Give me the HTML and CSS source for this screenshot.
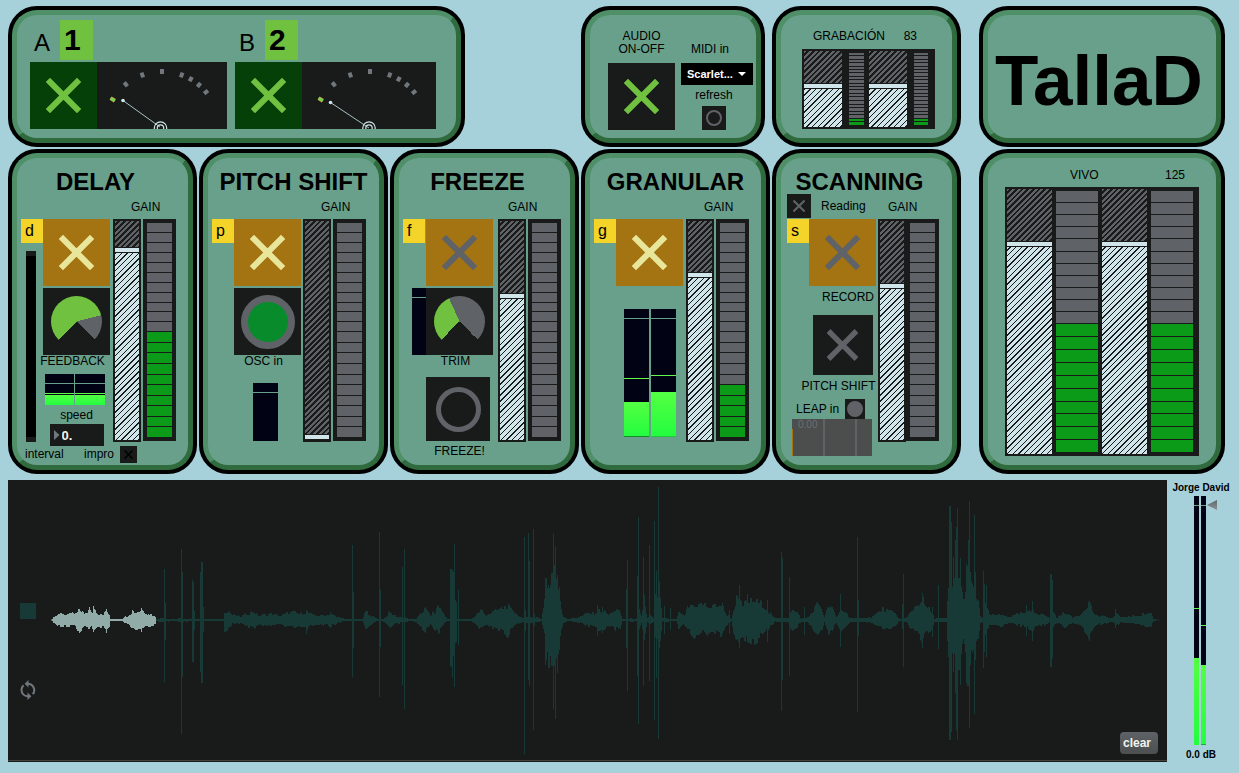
FILE: index.html
```html
<!DOCTYPE html>
<html lang="es">
<head>
    <meta charset="UTF-8">
    <meta name="viewport" content="width=device-width, initial-scale=1.0">
    <title>TallaD</title>
    <link rel="stylesheet" href="styles.css">
</head>
<body>
    <main class="rack">
        <section class="panel panel-inputs">
            <div class="panel-body channels">
                <div class="channel">
                    <div class="channel-head">
                        <span class="channel-name">A</span>
                        <span class="channel-key">1</span>
                    </div>
                    <div class="channel-row">
                        <input type="checkbox" class="toggle toggle-input" aria-label="Input A" checked>
                        <svg class="needle" width="130" height="67" viewBox="0 0 130 67">
                            <g id="ticks" class="ticks" transform="translate(65 67)">
                                <rect x="-2" y="-60" width="4" height="5" transform="rotate(-39)"/>
                                <rect x="-2" y="-60" width="4" height="5" transform="rotate(-20)"/>
                                <rect x="-2" y="-60" width="4" height="5"/>
                                <rect x="-2" y="-60" width="4" height="5" transform="rotate(20)"/>
                                <rect x="-2" y="-60" width="4" height="5" transform="rotate(30)"/>
                                <rect x="-2" y="-60" width="4" height="5" transform="rotate(40)"/>
                                <rect x="-2" y="-60" width="4" height="5" transform="rotate(50)"/>
                                <g transform="rotate(-59)">
                                    <rect class="tick-hot" x="-2" y="-60" width="4" height="5"/>
                                    <rect class="tick-on" x="-1" y="-60" width="2" height="5"/>
                                </g>
                            </g>
                            <path class="needle-line" d="M26 38.5 L63 65"/>
                            <circle class="needle-tip" cx="26" cy="38.5" r="1.8"/>
                            <circle class="needle-ring" cx="63.5" cy="66" r="6.2"/>
                            <circle class="needle-ring" cx="63.5" cy="66" r="3.2"/>
                        </svg>
                    </div>
                </div>
                <div class="channel">
                    <div class="channel-head">
                        <span class="channel-name">B</span>
                        <span class="channel-key">2</span>
                    </div>
                    <div class="channel-row">
                        <input type="checkbox" class="toggle toggle-input" aria-label="Input B" checked>
                        <svg class="needle" width="134" height="67" viewBox="0 0 134 67">
                            <use href="#ticks" x="3"/>
                            <path class="needle-line" d="M28.5 40.5 L67 66"/>
                            <circle class="needle-tip" cx="28.5" cy="40.5" r="1.8"/>
                            <circle class="needle-ring" cx="67" cy="66" r="6.2"/>
                            <circle class="needle-ring" cx="67" cy="66" r="3.2"/>
                        </svg>
                    </div>
                </div>
            </div>
        </section>

        <section class="panel panel-audio">
            <div class="panel-body audio">
                <div class="audio-col">
                    <label class="audio-label" for="audioOn">AUDIO<br>ON-OFF</label>
                    <input type="checkbox" class="toggle toggle-green" id="audioOn" checked>
                </div>
                <div class="audio-col">
                    <label class="audio-label midi-label" for="midiIn">MIDI in</label>
                    <div class="select">
                        <select id="midiIn">
                            <option>Scarlet...</option>
                        </select>
                    </div>
                    <div class="refresh">
                        <label for="refresh">refresh</label>
                        <button class="round round-refresh" id="refresh"></button>
                    </div>
                </div>
            </div>
        </section>

        <section class="panel">
            <div class="panel-body recording">
                <div class="mixer-head">
                    <span>GRABACIÓN</span>
                    <span>83</span>
                </div>
                <div class="mixer">
                    <input type="range" class="fader" aria-label="Grabación L" value="54" style="--value: 54">
                    <div class="level" data-on="2"></div>
                    <input type="range" class="fader" aria-label="Grabación R" value="54" style="--value: 54">
                    <div class="level" data-on="2"></div>
                </div>
            </div>
        </section>

        <section class="panel panel-last">
            <div class="panel-body">
                <h1>TallaD</h1>
            </div>
        </section>

        <section class="panel">
            <div class="panel-body">
                <h2 class="shifted">DELAY</h2>
                <div class="module module-wide">
                    <div class="controls">
                        <div class="controls-row">
                            <div class="side">
                                <span class="key">d</span>
                                <input type="range" class="interval" id="interval" value="0">
                            </div>
                            <div class="main">
                                <input type="checkbox" class="toggle toggle-effect" aria-label="Delay" checked>
                                <div class="dial">
                                    <input type="range" id="feedback" value="78" style="--value: 78">
                                </div>
                                <label class="caption" for="feedback">FEEDBACK</label>
                                <div class="vus vus-delay">
                                    <div class="vu" style="--level: 10px; --peak: 37%"></div>
                                    <div class="vu" style="--level: 10px; --peak: 37%"></div>
                                </div>
                                <label class="caption caption-speed" for="speed">speed</label>
                                <div class="number">
                                    <input type="text" id="speed" value="0.">
                                </div>
                            </div>
                        </div>
                    </div>
                    <div class="gain">
                        <label for="gainDelay">GAIN</label>
                        <div class="gain-row">
                            <input type="range" class="fader" id="gainDelay" value="88" style="--value: 88">
                            <div class="level" data-on="10"></div>
                        </div>
                    </div>
                </div>
                <div class="delay-foot">
                    <label for="interval">interval</label>
                    <label for="impro">impro</label>
                    <input type="checkbox" class="toggle toggle-impro" id="impro">
                </div>
            </div>
        </section>

        <section class="panel">
            <div class="panel-body">
                <h2>PITCH SHIFT</h2>
                <div class="module">
                    <div class="controls">
                        <div class="controls-row">
                            <div class="side">
                                <span class="key">p</span>
                            </div>
                            <div class="main">
                                <input type="checkbox" class="toggle toggle-effect" aria-label="Pitch shift" checked>
                                <button class="round round-osc" id="osc"></button>
                                <label class="caption" for="osc">OSC in</label>
                                <div class="vus vus-pitch">
                                    <div class="vu"></div>
                                </div>
                            </div>
                        </div>
                    </div>
                    <div class="gain">
                        <label for="gainPitch">GAIN</label>
                        <div class="gain-row">
                            <input type="range" class="fader" id="gainPitch" value="0" style="--value: 0">
                            <div class="level" data-on="0"></div>
                        </div>
                    </div>
                </div>
            </div>
        </section>

        <section class="panel">
            <div class="panel-body">
                <h2 class="shifted">FREEZE</h2>
                <div class="module module-freeze">
                    <div class="controls">
                        <div class="controls-row">
                            <div class="side">
                                <span class="key">f</span>
                                <div class="vu vu-trim"></div>
                            </div>
                            <div class="main">
                                <input type="checkbox" class="toggle toggle-effect" aria-label="Freeze">
                                <div class="dial">
                                    <input type="range" id="trim" value="41" style="--value: 41">
                                </div>
                                <label class="caption" for="trim">TRIM</label>
                                <button class="round round-freeze" id="freeze"></button>
                                <label class="freeze-label" for="freeze">FREEZE!</label>
                            </div>
                        </div>
                    </div>
                    <div class="gain gain-left">
                        <label for="gainFreeze">GAIN</label>
                        <div class="gain-row">
                            <input type="range" class="fader" id="gainFreeze" value="66" style="--value: 66">
                            <div class="level" data-on="0"></div>
                        </div>
                    </div>
                </div>
            </div>
        </section>

        <section class="panel">
            <div class="panel-body">
                <h2>GRANULAR</h2>
                <div class="module module-wide">
                    <div class="controls">
                        <div class="controls-row">
                            <div class="side">
                                <span class="key">g</span>
                            </div>
                            <div class="main">
                                <input type="checkbox" class="toggle toggle-effect" aria-label="Granular" checked>
                                <div class="vus vus-granular">
                                    <div class="vu" style="--level: 27%; --peak: 46%"></div>
                                    <div class="vu" style="--level: 35%; --peak: 48%"></div>
                                </div>
                            </div>
                        </div>
                    </div>
                    <div class="gain">
                        <label for="gainGranular">GAIN</label>
                        <div class="gain-row">
                            <input type="range" class="fader" id="gainGranular" value="76" style="--value: 76">
                            <div class="level" data-on="5"></div>
                        </div>
                    </div>
                </div>
            </div>
        </section>

        <section class="panel">
            <div class="panel-body">
                <h2 class="shifted">SCANNING</h2>
                <div class="module module-scanning">
                    <div class="controls">
                        <div class="reading">
                            <input type="checkbox" class="toggle toggle-reading" id="reading">
                            <label for="reading">Reading</label>
                        </div>
                        <div class="controls-row">
                            <div class="side">
                                <span class="key">s</span>
                            </div>
                            <div class="main">
                                <input type="checkbox" class="toggle toggle-effect" id="record">
                                <label class="record-label" for="record">RECORD</label>
                                <input type="checkbox" class="toggle toggle-shift" id="scanShift">
                                <label class="caption caption-shift" for="scanShift">PITCH SHIFT</label>
                            </div>
                        </div>
                        <div class="leap">
                            <label for="leap">LEAP in</label>
                            <button class="round round-leap" id="leap"></button>
                        </div>
                        <div class="leap-view">0.00</div>
                    </div>
                    <div class="gain gain-left">
                        <label for="gainScanning">GAIN</label>
                        <div class="gain-row">
                            <input type="range" class="fader" id="gainScanning" value="71" style="--value: 71">
                            <div class="level" data-on="0"></div>
                        </div>
                    </div>
                </div>
            </div>
        </section>

        <section class="panel panel-last">
            <div class="panel-body live">
                <div class="mixer-head">
                    <span>VIVO</span>
                    <span>125</span>
                </div>
                <div class="mixer">
                    <input type="range" class="fader" aria-label="Vivo L" value="80" style="--value: 80">
                    <div class="level" data-on="10"></div>
                    <input type="range" class="fader" aria-label="Vivo R" value="80" style="--value: 80">
                    <div class="level" data-on="10"></div>
                </div>
            </div>
        </section>
    </main>

    <footer class="bottom">
        <section class="wave">
            <div class="wave-tools">
                <button class="stop-btn" aria-label="Stop"></button>
                <button class="loop-btn" aria-label="Loop">
                    <svg width="16" height="20" viewBox="0 0 16 20">
                        <path d="M3.4 14.6 A6.5 6.5 0 0 1 3.6 5.2 M7.5 3.8 A6.4 6.4 0 0 1 12.8 14.2 M8.5 16.2 A6.4 6.4 0 0 1 3.2 14.4"/>
                        <path class="arrow" d="M8.5 0 V7.6 L4.6 3.8 Z M7.5 12.4 V20 L11.4 16.2 Z"/>
                    </svg>
                </button>
            </div>
            <svg class="wave-view" viewBox="48 -140 1119 280" preserveAspectRatio="none">
                <path id="waveRest" class="wave-rest"/>
                <path id="wavePlayed" class="wave-played"/>
            </svg>
            <button class="clear-btn">clear</button>
        </section>
        <section class="master">
            <label for="master">Jorge David</label>
            <div class="master-meter">
                <div class="vu" style="--level: 35%; --peak: 55%"></div>
                <div class="vu" style="--level: 32%; --peak: 48%"></div>
                <input type="range" class="master-slider" id="master" value="100">
            </div>
            <span>0.0 dB</span>
        </section>
    </footer>
    <script src="script.js"></script>
</body>
</html>
```

FILE: styles.css
```css
* {
    box-sizing: border-box;
}
body {
    margin: 0;
    padding: 6px 4px 11px 8px;
    min-height: 100vh;
    display: flex;
    flex-direction: column;
    gap: 6px;
    background-color: #a6d1db;
    color: #000;
    font-family: "Liberation Sans", Arial, sans-serif;
    font-size: 12px;
    line-height: 13px;
}
h1, h2 {
    margin: 0;
    font-weight: bold;
}
h1 {
    padding: 30px 0 0 7px;
    font-size: 71px;
    line-height: 71px;
}
h2 {
    padding-top: 12px;
    font-size: 24px;
    line-height: 24px;
    text-align: center;
    white-space: nowrap;
}
h2.shifted {
    padding-right: 14px;
}
input, button, select {
    display: block;
    margin: 0;
    padding: 0;
    border: none;
    border-radius: 0;
    appearance: none;
    flex-shrink: 0;
    font-family: inherit;
}
label {
    white-space: nowrap;
}

/* panels */
.rack {
    display: grid;
    grid-template-columns: repeat(5, 189fr) 262fr;
    gap: 2px;
    padding-right: 10px;
}
.panel {
    display: flex;
    background: #000;
    border: 4px solid #000;
    border-radius: 29px;
}
.panel-body {
    flex: 1;
    min-width: 0;
    background: #68a08b;
    border: 5px solid;
    border-color: #4f9069 #306b3d #306b3d #4f9069;
    border-radius: 25px;
}
.panel-inputs {
    grid-column: span 3;
    width: 80%;
}
.panel-audio {
    margin-right: 5px;
}
.panel-last {
    margin-left: 16px;
}

/* toggles */
.toggle {
    display: flex;
    align-items: center;
    justify-content: center;
    width: 67px;
    height: 67px;
    background: #191b1a;
    color: #5f6267;
}
.toggle::before {
    content: '';
    width: 53%;
    height: 53%;
    background: currentColor;
    clip-path: polygon(12% 0, 50% 38%, 88% 0, 100% 12%, 62% 50%, 100% 88%, 88% 100%, 50% 62%, 12% 100%, 0 88%, 38% 50%, 0 12%);
}
.toggle-input {
    background: #044007;
}
.toggle-input:checked, .toggle-green:checked {
    color: #70c140;
}
.toggle-effect {
    background: #a57412;
}
.toggle-effect:checked {
    color: #e8e69b;
}
.toggle-reading {
    width: 24px;
    height: 24px;
}
.toggle-shift {
    width: 60px;
    height: 60px;
    margin-top: 11px;
}
.toggle-impro {
    width: 17px;
    height: 17px;
    color: #000;
}

/* round buttons */
.round {
    display: flex;
    align-items: center;
    justify-content: center;
    background: #191b1a;
}
.round::before {
    content: '';
    box-sizing: border-box;
    border-radius: 50%;
    border: 2px solid #5f6267;
}
.round-refresh {
    width: 24px;
    height: 24px;
}
.round-refresh::before {
    width: 16px;
    height: 16px;
}
.round-osc {
    width: 67px;
    height: 67px;
    margin-top: 2px;
}
.round-osc::before {
    width: 54px;
    height: 54px;
    border-width: 7px;
    background: #088c2b;
}
.round-freeze {
    width: 64px;
    height: 64px;
    margin-top: 9px;
    align-self: flex-start;
}
.round-freeze::before {
    width: 45px;
    height: 45px;
    border-width: 5px;
}
.round-leap {
    width: 20px;
    height: 20px;
}
.round-leap::before {
    width: 16px;
    height: 16px;
    background: #5f6267;
}

/* faders and levels */
.fader {
    --pos: calc(100% - var(--value) * 1%);
    width: 28px;
    height: 223px;
    border: 2px solid #191b1a;
    writing-mode: vertical-lr;
    direction: rtl;
    background:
        linear-gradient(#191b1a 1px, #cfe5ea 1px 5px, #191b1a 5px) 0 var(--pos) / 100% 6px no-repeat,
        repeating-linear-gradient(135deg, transparent 0 2px, #191b1a 2px 4px) 0 0 / 100% var(--pos) no-repeat,
        linear-gradient(#5f6267, #5f6267) 0 0 / 100% var(--pos) no-repeat,
        repeating-linear-gradient(135deg, #cfe5ea 0 3px, #191b1a 3px 4px);
    background-origin: padding-box;
    background-clip: padding-box;
}
.fader::-webkit-slider-thumb,
.dial input::-webkit-slider-thumb,
.interval::-webkit-slider-thumb {
    appearance: none;
    width: 6px;
    height: 6px;
    opacity: 0;
}
.level {
    display: flex;
    flex-direction: column;
    gap: 1px;
    width: 33px;
    height: 222px;
    padding: 4px;
    background: #191b1a;
}
.level i {
    flex: 1;
    background: #5f6267;
}
.level i:nth-child(n+12) {
    flex-grow: 1.07;
}
.level i.on {
    background: #0c9a19;
}
.mixer {
    display: flex;
    padding: 2px;
    background: #191b1a;
}
.mixer .fader {
    border: none;
}
.mixer-head {
    display: flex;
    justify-content: space-between;
}

/* black meters */
.vus {
    display: flex;
    gap: 2px;
}
.vu {
    flex: 1;
    --level: 0%;
    --peak: -20%;
    background:
        linear-gradient(#68a08b, #68a08b) 0 9px / 100% 1px no-repeat,
        linear-gradient(#62f84c, #62f84c) 0 calc(100% - var(--peak)) / 100% 1px no-repeat,
        linear-gradient(#54ff42, #23fd40) 0 100% / 100% var(--level) no-repeat,
        #010214;
}

/* inputs A and B */
.channels {
    display: flex;
    gap: 8px;
    padding: 5px 0 9px 13px;
}
.channel-head {
    display: flex;
    gap: 10px;
    height: 42px;
    padding-left: 4px;
}
.channel-name {
    width: 16px;
    padding-top: 11px;
    font-size: 24px;
    line-height: 24px;
}
.channel-key {
    width: 33px;
    height: 40px;
    padding-left: 4px;
    background: #70c140;
    font-size: 30px;
    font-weight: bold;
    line-height: 40px;
}
.channel-row {
    display: flex;
}
.needle {
    display: block;
    background: #191b1a;
}
.ticks {
    fill: #70787d;
}
.tick-hot {
    fill: #cfa452;
}
.tick-on {
    fill: #5fe04a;
}
.needle-line {
    stroke: #a9c0c6;
    stroke-width: 1;
}
.needle-tip {
    fill: #cfe5ea;
}
.needle-ring {
    fill: none;
    stroke: #cfe5ea;
    stroke-width: 1.2;
}

/* audio */
.audio {
    display: flex;
    align-items: flex-end;
    gap: 6px;
    padding: 15px 0 8px 18px;
}
.audio-col {
    display: flex;
    flex-direction: column;
    align-items: center;
}
.audio-label {
    margin-bottom: 7px;
    text-align: center;
}
.midi-label {
    align-self: flex-start;
    padding-left: 10px;
}
.refresh {
    display: flex;
    flex-direction: column;
    align-items: center;
    gap: 4px;
    padding: 4px 6px 0 0;
}
.select {
    position: relative;
}
.select select {
    width: 72px;
    height: 22px;
    padding-left: 6px;
    background: #000;
    color: #fff;
    font-size: 11px;
    font-weight: bold;
}
.select::after {
    content: '';
    position: absolute;
    top: 9px;
    right: 7px;
    width: 8px;
    height: 4px;
    background: #fff;
    clip-path: polygon(0 0, 100% 0, 50% 100%);
    pointer-events: none;
}

/* recording and live mixers */
.recording {
    padding: 15px 17px 0 21px;
}
.recording .mixer-head {
    padding: 0 18px 6px 11px;
}
.recording .mixer {
    width: 133px;
}
.recording .fader {
    width: 38px;
    height: 76px;
}
.recording .level {
    width: 28px;
    height: 76px;
    padding: 2px 5px 2px 7px;
}
.live {
    padding: 11px 0 0 17px;
}
.live .mixer-head {
    width: 194px;
    padding: 0 14px 5px 65px;
}
.live .mixer {
    width: 194px;
}
.live .fader {
    width: 45px;
    height: 265px;
}
.live .level {
    width: 51px;
    height: 265px;
    padding: 2px 4px;
}

/* effect modules */
.module {
    display: flex;
    align-items: flex-start;
    gap: 2px;
    padding-left: 4px;
}
.module-wide {
    gap: 3px;
}
.module-freeze {
    gap: 5px;
}
.module-scanning {
    padding-left: 6px;
}
.controls {
    padding-top: 25px;
}
.module-scanning .controls {
    padding-top: 0;
    width: 89px;
}
.controls-row {
    display: flex;
}
.side {
    display: flex;
    flex-direction: column;
    width: 22px;
}
.module-freeze .side {
    width: 23px;
}
.key {
    width: 22px;
    height: 24px;
    padding-left: 4px;
    background: #f4d428;
    font-size: 16px;
    line-height: 24px;
}
.interval {
    width: 10px;
    height: 191px;
    margin: 8px 0 0 5px;
    writing-mode: vertical-lr;
    direction: rtl;
    background: #000;
    border: solid #191b1a;
    border-width: 5px 0;
}
.vu-trim {
    flex: none;
    align-self: flex-end;
    width: 14px;
    height: 67px;
    margin-top: 45px;
}
.main {
    display: flex;
    flex-direction: column;
    align-items: center;
    width: 67px;
}
.dial {
    margin-top: 2px;
    padding: 8px;
    background: #191b1a;
}
.dial input {
    width: 51px;
    height: 51px;
    border-radius: 50%;
    background: conic-gradient(from 225deg, #70c140 calc(var(--value) * 2.7deg), #5f6267 0 270deg, transparent 0);
}
.caption {
    padding-right: 8px;
}
.caption-speed {
    margin: 4px 0 2px;
    padding-right: 0;
}
.caption-shift {
    margin-top: 5px;
}
.record-label {
    align-self: flex-end;
    margin-top: 5px;
    padding-right: 2px;
}
.freeze-label {
    margin-top: 4px;
}
.vus-delay {
    width: 60px;
    height: 31px;
    margin: 6px 4px 0 0;
    gap: 1px;
}
.vus-pitch {
    width: 25px;
    height: 58px;
    margin: 15px 4px 0 0;
}
.vus-granular {
    width: 52px;
    height: 128px;
    margin-top: 23px;
}
.number {
    display: flex;
    align-items: center;
    gap: 2px;
    width: 54px;
    height: 22px;
    padding-left: 4px;
    background: #191b1a;
}
.number::before {
    content: '';
    width: 6px;
    height: 11px;
    background: #70787d;
    clip-path: polygon(0 0, 100% 50%, 0 100%);
}
.number input {
    width: 36px;
    background: none;
    color: #f4f4e8;
    font-size: 13px;
    font-weight: bold;
}
.gain label {
    display: block;
    padding: 7px 0 5px 18px;
}
.gain-left label {
    padding-left: 10px;
}
.gain-row {
    display: flex;
    gap: 2px;
}
.module-scanning .gain-row {
    gap: 0;
}
.delay-foot {
    display: flex;
    align-items: center;
    padding: 0 0 2px 8px;
}
.delay-foot label:first-child {
    width: 59px;
}
.delay-foot .toggle {
    margin-left: 6px;
}
.reading {
    display: flex;
    align-items: center;
    gap: 10px;
    height: 25px;
    padding-bottom: 1px;
}
.leap {
    display: flex;
    align-items: center;
    gap: 6px;
    margin: 6px 0 0 9px;
}
.leap-view {
    width: 80px;
    height: 37px;
    margin-left: 5px;
    padding-left: 6px;
    background:
        linear-gradient(#a57412, #a57412) 0 100% / 1px 27px no-repeat,
        linear-gradient(#5f6267, #5f6267) 31px 0 / 2px 100% no-repeat,
        linear-gradient(#5f6267, #5f6267) 63px 0 / 2px 100% no-repeat,
        #4b4e4d;
    color: #6b6f72;
    font-size: 10px;
    line-height: 11px;
}

/* waveform */
.bottom {
    display: flex;
    flex: 1;
}
.wave {
    position: relative;
    display: flex;
    flex: 1;
    background: #191b1a;
    box-shadow: inset 0 -1px #191b1a, inset 0 -2px #44423c;
}
.wave-tools {
    display: flex;
    flex-direction: column;
    gap: 61px;
    width: 40px;
    padding: 123px 0 0 12px;
}
.stop-btn {
    width: 16px;
    height: 16px;
    background: #173a37;
}
.loop-btn {
    width: 16px;
    height: 20px;
    background: none;
}
.loop-btn path {
    fill: none;
    stroke: #70787d;
    stroke-width: 2;
}
.loop-btn .arrow {
    fill: #70787d;
    stroke: none;
}
.wave-view {
    flex: 1;
    min-width: 0;
    height: 280px;
}
.wave-rest {
    fill: #173a37;
}
.wave-played {
    fill: #90aba8;
}
.clear-btn {
    position: absolute;
    right: 9px;
    bottom: 8px;
    width: 38px;
    height: 22px;
    padding-right: 4px;
    border-radius: 4px;
    background: linear-gradient(#5f6267, #4b4f4e);
    color: #f0f4f0;
    font-size: 12px;
    font-weight: bold;
}

/* master output */
.master {
    display: flex;
    flex-direction: column;
    align-items: center;
    gap: 2px;
    width: 68px;
    padding: 2px 0 1px;
    font-size: 10px;
    font-weight: bold;
    line-height: 12px;
}
.master-meter {
    position: relative;
    display: flex;
    flex: 1;
    gap: 2px;
    width: 12px;
    margin: 0 2px 2px 0;
}
.master-slider {
    position: absolute;
    top: 4px;
    left: 100%;
    width: 12px;
    height: 100%;
    writing-mode: vertical-lr;
    direction: rtl;
    background: none;
}
.master-slider::-webkit-slider-thumb {
    appearance: none;
    width: 10px;
    height: 10px;
    background: linear-gradient(#5f6669, #8b9396);
    clip-path: polygon(0 50%, 100% 0, 100% 100%);
}
```

FILE: script.js
```javascript
const SEGMENTS = 21;

document.querySelectorAll('.level').forEach(level => {
    const on = Number(level.dataset.on);
    for (let i = 0; i < SEGMENTS; i++) {
        const segment = document.createElement('i');
        if (i >= SEGMENTS - on) segment.className = 'on';
        level.appendChild(segment);
    }
});

// envelope points: x, up, down
const played = [
    [51, 0, 0], [54, 5, 5], [58, 7, 7], [66, 6, 7], [69, 9, 7], [74, 6, 6], [78, 11, 13], [84, 7, 8],
    [89, 12, 9], [91, 8, 8], [94, 13, 12], [97, 8, 8], [103, 7, 8], [106, 11, 12], [109, 6, 7], [110, 1, 1],
    [121, 1, 1], [124, 3, 3], [128, 6, 6], [132, 10, 8], [136, 9, 10], [141, 12, 12], [145, 9, 8],
    [150, 7, 8], [156, 3, 3]
];
const playedPeaks = [
    [89, 13, 9], [93, 14, 12], [106, 11, 13], [79, 11, 13], [132, 10, 7], [141, 12, 12]
];
const rest = [
    [156, 2, 2], [223, 1, 1], [224, 11, 12], [228, 11, 10], [232, 6, 5], [240, 4, 4], [248, 8, 8], [253, 10, 10],
    [258, 5, 5], [270, 7, 6], [280, 5, 5], [287, 8, 9], [293, 9, 8], [300, 7, 7], [306, 10, 10], [312, 6, 6],
    [320, 5, 5], [331, 7, 7], [336, 4, 4], [345, 1, 1], [362, 1, 1], [365, 10, 10], [368, 8, 7], [372, 4, 4],
    [378, 1, 1], [384, 2, 2], [389, 9, 9], [396, 4, 4], [406, 3, 3], [408, 1, 1], [416, 1, 2], [419, 7, 7],
    [425, 13, 13], [430, 6, 5], [435, 10, 11], [438, 17, 15], [444, 6, 5], [447, 1, 1], [470, 1, 1], [473, 3, 3],
    [481, 12, 11], [485, 6, 5], [490, 8, 8], [500, 13, 13], [507, 17, 18], [512, 10, 9], [516, 8, 6], [520, 3, 3],
    [537, 3, 3], [541, 1, 1], [544, 24, 17], [546, 44, 46], [549, 38, 48], [552, 47, 47], [556, 50, 50],
    [559, 34, 30], [561, 14, 14], [563, 4, 4], [568, 1, 1], [580, 4, 3], [588, 8, 8], [594, 8, 7], [598, 11, 12],
    [604, 10, 10], [608, 6, 6], [615, 12, 11], [620, 9, 9], [622, 1, 1], [636, 2, 2], [638, 14, 15], [641, 4, 4],
    [644, 20, 20], [647, 2, 2], [650, 6, 6], [653, 2, 2], [655, 28, 26], [660, 22, 22], [662, 2, 2], [676, 1, 1],
    [678, 8, 9], [684, 5, 5], [687, 14, 13], [690, 17, 14], [694, 18, 19], [704, 18, 14], [710, 14, 17],
    [716, 18, 16], [722, 17, 17], [725, 8, 7], [731, 2, 1], [734, 15, 18], [736, 25, 26], [742, 17, 20],
    [747, 22, 24], [754, 22, 24], [763, 18, 18], [768, 10, 10], [775, 2, 2], [788, 3, 3], [791, 12, 12],
    [797, 8, 8], [801, 2, 2], [808, 3, 3], [813, 12, 12], [818, 20, 18], [821, 14, 15], [824, 3, 3],
    [828, 17, 17], [832, 13, 11], [836, 3, 3], [841, 12, 12], [846, 8, 7], [850, 2, 2], [870, 3, 3],
    [876, 7, 6], [882, 13, 10], [890, 10, 9], [895, 7, 7], [899, 1, 1], [907, 3, 3], [910, 10, 10],
    [918, 20, 17], [922, 25, 25], [926, 14, 14], [930, 12, 12], [934, 2, 2], [946, 2, 2], [948, 38, 38],
    [952, 38, 36], [955, 50, 50], [959, 50, 50], [963, 22, 24], [966, 52, 58], [970, 45, 48], [974, 30, 32],
    [978, 20, 20], [980, 4, 4], [983, 2, 2], [985, 20, 18], [989, 6, 7], [1000, 6, 7], [1010, 4, 4],
    [1018, 7, 6], [1028, 9, 9], [1033, 12, 12], [1036, 8, 6], [1044, 6, 6], [1049, 2, 2], [1053, 10, 10],
    [1056, 3, 3], [1065, 9, 8], [1072, 3, 3], [1080, 6, 7], [1084, 13, 12], [1089, 21, 22], [1093, 9, 9],
    [1096, 5, 5], [1105, 4, 4], [1112, 2, 2], [1116, 8, 7], [1120, 3, 3], [1135, 5, 4], [1145, 7, 7],
    [1151, 8, 8], [1153, 1, 1], [1159, 0, 0]
];
const restPeaks = [
    [164, 51, 62], [165, 17, 20], [181, 71, 114], [182, 48, 57], [192, 40, 42], [193, 38, 42], [194, 9, 10],
    [200, 48, 52], [201, 58, 63], [202, 58, 63], [203, 13, 12], [306, 10, 14], [330, 8, 8], [352, 75, 57],
    [353, 28, 28], [379, 88, 77], [380, 30, 27], [402, 53, 65], [404, 71, 89], [450, 51, 47], [451, 51, 46],
    [452, 50, 58], [453, 48, 36], [454, 76, 67], [455, 20, 23], [456, 18, 22], [458, 30, 25], [524, 83, 134],
    [525, 10, 11], [528, 87, 60], [529, 59, 66], [533, 91, 110], [534, 6, 6], [545, 42, 45], [546, 42, 40],
    [548, 35, 47], [551, 47, 46], [552, 47, 46], [553, 86, 89], [554, 55, 46], [555, 74, 99], [557, 45, 53],
    [559, 33, 30], [597, 15, 16], [602, 13, 13], [626, 31, 28], [627, 60, 71],
    [637, 44, 56], [638, 103, 104], [643, 63, 66], [644, 25, 20], [649, 75, 61], [654, 99, 100], [656, 49, 58],
    [658, 133, 119], [659, 38, 28], [664, 14, 14], [670, 12, 10], [729, 10, 14], [739, 35, 28], [747, 26, 22],
    [767, 20, 22], [781, 68, 91], [782, 62, 60], [789, 43, 56], [804, 13, 15], [840, 26, 27], [857, 83, 92],
    [858, 20, 16], [902, 16, 9], [903, 46, 47], [922, 27, 28], [932, 13, 17], [938, 35, 29], [949, 114, 120],
    [950, 114, 120], [951, 98, 112], [953, 63, 52], [955, 80, 73], [956, 93, 110], [957, 112, 120],
    [960, 62, 65], [966, 56, 63], [967, 54, 66], [968, 80, 66], [969, 119, 108], [970, 48, 45], [974, 105, 94],
    [975, 48, 40], [983, 49, 48], [984, 36, 32], [986, 35, 37], [1026, 15, 16], [1032, 19, 21], [1050, 46, 47],
    [1051, 46, 47], [1052, 40, 38], [1115, 11, 8]
];

// repeatable noise between 0 and 1
function noise(n) {
    const v = Math.sin(n * 12.9898) * 43758.5453;
    return v - Math.floor(v);
}

function buildPath(points, peaks) {
    let d = '';
    let k = 0;
    for (let x = points[0][0]; x < points[points.length - 1][0]; x++) {
        while (points[k + 1][0] <= x) k++;
        const [x0, u0, d0] = points[k];
        const [x1, u1, d1] = points[k + 1];
        const t = (x - x0) / (x1 - x0);
        // neighbouring columns share a value, so the outline stays blocky
        const n = Math.floor(x / 2);
        const up = (u0 + (u1 - u0) * t) * (0.65 + 0.4 * noise(n));
        const down = (d0 + (d1 - d0) * t) * (0.65 + 0.4 * noise(n + 0.5));
        const top = Math.max(0.5, Math.round(up));
        const bottom = Math.max(0.5, Math.round(down));
        d += `M${x} ${-top}h1V${bottom}h-1Z`;
    }
    peaks.forEach(([x, up, down]) => {
        d += `M${x} ${-up}h1V${down}h-1Z`;
    });
    return d;
}

document.getElementById('wavePlayed').setAttribute('d', buildPath(played, playedPeaks));
document.getElementById('waveRest').setAttribute('d', buildPath(rest, restPeaks));
```
